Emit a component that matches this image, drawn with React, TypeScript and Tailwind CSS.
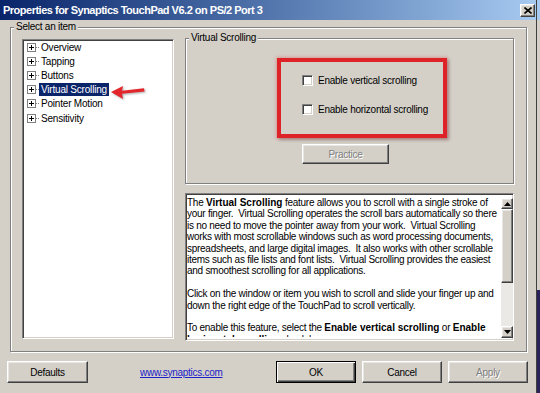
import React from "react";

const raised =
  "border border-t-white border-l-white border-r-[#404040] border-b-[#404040] shadow-[inset_-1px_-1px_0_#808080,inset_1px_1px_0_#e8e6e2]";
const sunken =
  "border border-t-[#808080] border-l-[#808080] border-r-white border-b-white shadow-[inset_1px_1px_0_#404040,inset_-1px_-1px_0_#d4d0c8]";
const etched = "border border-[#808080] shadow-[inset_1px_1px_0_#fff,1px_1px_0_#fff]";
const disabledText = "text-[#808080] [text-shadow:1px_1px_0_#fff]";

function PlusBox() {
  return (
    <svg width="12" height="9" viewBox="0 0 12 9" className="shrink-0">
      <rect x="0.5" y="0.5" width="8" height="8" fill="#fff" stroke="#808080" />
      <path d="M2 4.5H7M4.5 2V7" stroke="#000" />
      <rect x="9" y="4" width="1" height="1" fill="#808080" />
      <rect x="11" y="4" width="1" height="1" fill="#808080" />
    </svg>
  );
}

function Tree() {
  const items = ["Overview", "Tapping", "Buttons", "Virtual Scrolling", "Pointer Motion", "Sensitivity"];
  return (
    <div className={`relative mt-[6px] w-[152px] h-[300px] bg-white shrink-0 ${sunken} pl-[4px]`}>
      {items.map((it) => {
        const sel = it === "Virtual Scrolling";
        return (
          <div key={it} className="h-[14.2px] flex items-center">
            <PlusBox />
            <span
              className={`px-[2px] leading-[13px] tracking-[-0.2px] whitespace-nowrap ${
                sel ? "bg-[#0a246a] text-white" : ""
              }`}
            >
              {it}
            </span>
          </div>
        );
      })}
      <svg
        className="absolute left-[86px] top-[43px] drop-shadow-[1px_1px_1px_rgba(0,0,0,0.35)]"
        width="40"
        height="20"
        viewBox="0 0 40 20"
      >
        <polygon points="2,9 14,3 13,7.8 35,5.2 35.5,8.4 13,10.8 14,16" fill="#e3262b" />
      </svg>
    </div>
  );
}

function Checkbox({ label }: { label: string }) {
  return (
    <div className="h-[13px] flex items-center gap-[5px]">
      <span className={`w-[11px] h-[11px] bg-white shrink-0 ${sunken}`} />
      <span className="tracking-[-0.25px] whitespace-nowrap">{label}</span>
    </div>
  );
}

function ScrollBtn({ up }: { up: boolean }) {
  return (
    <div className={`${up ? "h-[11px]" : "h-[12px]"} w-[12px] bg-[#d4d0c8] ${raised} flex items-center justify-center shrink-0`}>
      <svg width="7" height="4" viewBox="0 0 7 4">
        <path d={up ? "M3.5 0L7 4H0Z" : "M0 0H7L3.5 4Z"} fill="#000" />
      </svg>
    </div>
  );
}

function Description() {
  const lines: React.ReactNode[] = [
    <>
      The <b className="tracking-normal">Virtual Scrolling</b> feature allows you to scroll with a single stroke of
    </>,
    "your finger.  Virtual Scrolling operates the scroll bars automatically so there",
    "is no need to move the pointer away from your work.  Virtual Scrolling",
    "works with most scrollable windows such as word processing documents,",
    "spreadsheets, and large digital images.  It also works with other scrollable",
    "items such as file lists and font lists.  Virtual Scrolling provides the easiest",
    "and smoothest scrolling for all applications.",
    "\u00a0",
    "Click on the window or item you wish to scroll and slide your finger up and",
    "down the right edge of the TouchPad to scroll vertically.",
    "\u00a0",
    <>
      To enable this feature, select the <b className="tracking-normal">Enable vertical scrolling</b> or{" "}
      <b className="tracking-normal">Enable</b>
    </>,
    <>
      <b className="tracking-normal">horizontal scrolling</b> check box.
    </>,
  ];
  return (
    <div className={`mt-[9px] h-[148px] bg-white flex ${sunken}`}>
      <div className="flex-1 pl-[1px] pt-[3px]">
        <div className="h-[140px] overflow-hidden">
          {lines.map((l, i) => (
            <div key={i} className="h-[11.4px] leading-[11.4px] whitespace-pre tracking-[-0.27px]">
              {l}
            </div>
          ))}
        </div>
      </div>
      <div className="w-[12px] mt-[4px] mb-[2px] flex flex-col shrink-0">
        <ScrollBtn up />
        <div className={`h-[74px] bg-[#d4d0c8] ${raised} shrink-0`} />
        <div className="flex-1 bg-[#ebe9e5]" />
        <ScrollBtn up={false} />
      </div>
    </div>
  );
}

function Button({ label, w, disabled, def }: { label: string; w: string; disabled?: boolean; def?: boolean }) {
  const frame = def
    ? "border border-black shadow-[inset_1px_1px_0_#fff,inset_-1px_-1px_0_#404040,inset_-2px_-2px_0_#808080]"
    : raised;
  return (
    <div className={`${w} h-[22px] bg-[#d4d0c8] ${frame} flex items-center justify-center shrink-0`}>
      <span className={`tracking-[-0.25px] ${disabled ? disabledText : ""}`}>{label}</span>
    </div>
  );
}

export default function App() {
  return (
    <div className="w-[540px] h-[393px] overflow-hidden flex bg-[#d4d0c8] font-['Liberation_Sans',Arial,sans-serif] text-black text-[10px]">
      <div className="w-[537px] h-full flex flex-col border-r border-[#404040] shrink-0">
        <div className="h-[20px] shrink-0 flex items-center justify-between pl-[3px] pr-[1px] bg-linear-to-r from-[#0a246a] to-[#a6caf0]">
          <span className="text-white font-bold text-[11px] tracking-[-0.5px] whitespace-nowrap">
            Properties for Synaptics TouchPad V6.2 on PS/2 Port 3
          </span>
          <div className={`w-[15px] h-[13px] bg-[#d4d0c8] ${raised} flex items-center justify-center`}>
            <svg width="8" height="7" viewBox="0 0 8 7">
              <path d="M0.5 0.5L7.5 6.5M7.5 0.5L0.5 6.5" stroke="#000" strokeWidth="1.6" />
            </svg>
          </div>
        </div>

        <fieldset className={`ml-[10px] mt-[1px] w-[517px] h-[331px] min-w-0 ${etched}`}>
          <legend className="ml-[3px] px-[2px] leading-[12px] tracking-[-0.25px] bg-[#d4d0c8]">Select an item</legend>
          <div className="flex pl-[11px] gap-[11px]">
            <Tree />
            <div className="w-[329px] -mt-[1px] flex flex-col">
              <fieldset className={`h-[152px] min-w-0 ${etched}`}>
                <legend className="ml-[3px] px-[2px] leading-[12px] tracking-[-0.25px] bg-[#d4d0c8]">
                  Virtual Scrolling
                </legend>
                <div className="relative pl-[116px] pt-[30px] flex flex-col items-start">
                  <div className="flex flex-col gap-[16px]">
                    <Checkbox label="Enable vertical scrolling" />
                    <Checkbox label="Enable horizontal scrolling" />
                  </div>
                  <div className={`mt-[28px] w-[87px] h-[20px] ${raised} flex items-center justify-center`}>
                    <span className={`tracking-[-0.25px] ${disabledText}`}>Practice</span>
                  </div>
                  <div className="absolute left-[91px] top-[14px] w-[170px] h-[80px] border-[4px] border-[#de2328] shadow-[0_0_3px_1px_rgba(222,60,60,0.35),2px_2px_3px_rgba(0,0,0,0.25)]" />
                </div>
              </fieldset>
              <Description />
            </div>
          </div>
        </fieldset>

        <div className="mt-[9px] h-[22px] flex items-center pl-[7px] pr-[8px]">
          <Button label="Defaults" w="w-[81px]" />
          <span className="ml-[52px] text-[#2020c8] underline tracking-[-0.28px] whitespace-nowrap">www.synaptics.com</span>
          <div className="ml-auto flex gap-[6px]">
            <Button label="OK" w="w-[80px]" def />
            <Button label="Cancel" w="w-[80px]" />
            <Button label="Apply" w="w-[80px]" disabled />
          </div>
        </div>
      </div>
      <div className="w-[3px] flex flex-col">
        <div className="h-[20px] bg-[#a6caf0]" />
        <div className="flex-1 bg-[#d4d0c8]" />
        <div className="h-[103px] bg-[#2a2358]" />
      </div>
    </div>
  );
}
